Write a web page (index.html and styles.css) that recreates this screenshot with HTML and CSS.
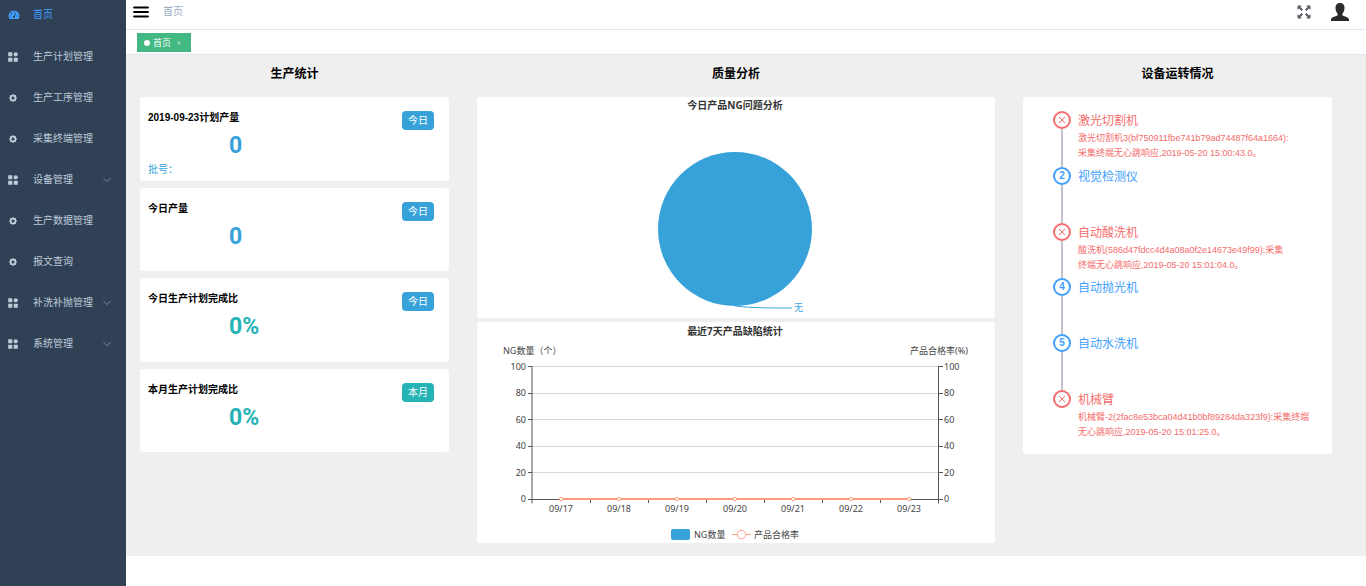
FILE: index.html
```html
<!DOCTYPE html>
<html lang="zh-CN">
<head>
<meta charset="utf-8">
<meta name="viewport" content="width=device-width, initial-scale=1">
<title>首页</title>
<link rel="stylesheet" href="styles.css">
</head>
<body>
<svg class="sprite" aria-hidden="true">
  <symbol id="i-dash" viewBox="0 0 12 12">
    <path fill="currentColor" fill-rule="evenodd" d="M6 1.4A5.4 5.4 0 0 0 1.400 9.700Q1.600 10 2 10H10Q10.400 10 10.600 9.700A5.400 5.400 0 0 0 6 1.400ZM5.400 2.400H6.600V3.600H5.400ZM2.700 3.700H3.900V4.900H2.700ZM1.500 6.400H2.700V7.600H1.500ZM9.300 6.400H10.500V7.600H9.300ZM7.500 3.700L8.300 4.100L6.900 7Q7.500 8 6.700 8.700Q6 9.200 5.200 8.700Q4.500 7.800 5.200 7Q5.600 6.600 6.100 6.700Z"/>
  </symbol>
  <symbol id="i-grid" viewBox="0 0 10 10">
    <path fill="currentColor" d="M.2.2h4.100v4.100H.2zM.2 5.700h4.100v4H.2zM5.700 5.700h4.100v4H5.700z"/><circle cx="7.700" cy="2.300" r="2.100" fill="currentColor"/>
  </symbol>
  <symbol id="i-gear" viewBox="0 0 10 10">
    <circle cx="5" cy="5" r="2.400" fill="none" stroke="currentColor" stroke-width="1.700"/>
    <path stroke="currentColor" stroke-width="1.500" d="M5 1.200v1.200M5 7.600v1.200M1.200 5h1.200M7.600 5h1.200M2.300 2.300l.9.9M6.800 6.800l.9.9M2.300 7.700l.9-.9M6.800 3.200l.9-.9"/>
  </symbol>
  <symbol id="i-down" viewBox="0 0 8 8"><path d="M.6 2.200L4 5.600L7.400 2.200" fill="none" stroke="currentColor"/></symbol>
  <symbol id="i-x" viewBox="0 0 8 8"><path d="M1 1L7 7M7 1L1 7" fill="none" stroke="currentColor"/></symbol>
</svg>
<div class="app">
  <nav class="sidebar">
    <ul class="menu">
      <li><a class="item active" href="#"><svg class="ico dash"><use href="#i-dash"/></svg><span>首页</span></a></li>
      <li><a class="item" href="#"><svg class="ico"><use href="#i-grid"/></svg><span>生产计划管理</span></a></li>
      <li><a class="item" href="#"><svg class="ico"><use href="#i-gear"/></svg><span>生产工序管理</span></a></li>
      <li><a class="item" href="#"><svg class="ico"><use href="#i-gear"/></svg><span>采集终端管理</span></a></li>
      <li><a class="item" href="#"><svg class="ico"><use href="#i-grid"/></svg><span>设备管理</span><svg class="arrow"><use href="#i-down"/></svg></a></li>
      <li><a class="item" href="#"><svg class="ico"><use href="#i-gear"/></svg><span>生产数据管理</span></a></li>
      <li><a class="item" href="#"><svg class="ico"><use href="#i-gear"/></svg><span>报文查询</span></a></li>
      <li><a class="item" href="#"><svg class="ico"><use href="#i-grid"/></svg><span>补洗补抛管理</span><svg class="arrow"><use href="#i-down"/></svg></a></li>
      <li><a class="item" href="#"><svg class="ico"><use href="#i-grid"/></svg><span>系统管理</span><svg class="arrow"><use href="#i-down"/></svg></a></li>
    </ul>
  </nav>
  <div class="page">
    <header class="navbar">
      <button class="icon-btn" aria-label="折叠菜单"><svg width="16" height="12" viewBox="0 0 16 12"><path d="M1 1.500H15M1 6H15M1 10.500H15" stroke="#000" stroke-width="1.800" stroke-linecap="round"/></svg></button>
      <a class="crumb" href="#">首页</a>
      <button class="icon-btn full" aria-label="全屏"><svg width="14" height="14" viewBox="0 0 14 14"><g fill="#5a5e66"><path id="c" d="M.5.5H4.700L3.500 1.900L6 4.400L4.500 5.900L2 3.400L.5 4.800Z"/><use href="#c" transform="matrix(-1 0 0 1 14 0)"/><use href="#c" transform="matrix(1 0 0 -1 0 14)"/><use href="#c" transform="matrix(-1 0 0 -1 14 14)"/></g></svg></button>
      <button class="icon-btn" aria-label="用户"><svg width="18" height="18" viewBox="0 0 18 18"><path fill="#2a2a2a" d="M9 0C12.200 0 13.700 2 13.500 5C13.400 7.500 12.600 9.400 11.400 10.700V12.200C12 13.200 17.600 13.500 18 16.500V18H0V16.500C.4 13.500 6 13.200 6.600 12.200V10.700C5.400 9.400 4.600 7.500 4.500 5C4.300 2 5.800 0 9 0Z"/></svg></button>
    </header>
    <div class="tabs">
      <div class="tab"><i class="dot"></i><a href="#">首页</a><button class="close" aria-label="关闭"><svg width="4" height="4"><use href="#i-x"/></svg></button></div>
    </div>
    <main class="board">
      <section>
        <h2>生产统计</h2>
        <div class="stats">
          <article class="card stat"><h3>2019-09-23计划产量</h3><span class="badge">今日</span><p class="num">0</p><p class="lot">批号：</p></article>
          <article class="card stat"><h3>今日产量</h3><span class="badge">今日</span><p class="num">0</p></article>
          <article class="card stat"><h3>今日生产计划完成比</h3><span class="badge">今日</span><p class="num teal">0%</p></article>
          <article class="card stat"><h3>本月生产计划完成比</h3><span class="badge teal-bg">本月</span><p class="num teal">0%</p></article>
        </div>
      </section>
      <section>
        <h2>质量分析</h2>
        <div class="charts">
          <div class="card">
            <svg class="chart" viewBox="0 0 518 221" role="img" aria-label="今日产品NG问题分析">
              <text class="ct mid" x="258" y="12">今日产品NG问题分析</text>
              <circle cx="258" cy="132" r="77" fill="#37a2da"/>
              <path d="M258 209Q275 211 300 211H315" fill="none" stroke="#37a2da"/>
              <text class="lab blue" x="317" y="214">无</text>
            </svg>
          </div>
          <div class="card">
            <svg class="chart" viewBox="0 0 518 221" role="img" aria-label="最近7天产品缺陷统计">
              <text class="ct mid" x="258" y="13">最近7天产品缺陷统计</text>
              <text class="lab" x="26" y="32">NG数量（个）</text>
              <text class="lab end" x="491" y="32">产品合格率(%)</text>
              <path d="M55 44.500H461M55 71.500H461M55 97.500H461M55 124.500H461M55 150.500H461" stroke="#d8d8d8"/>
              <path d="M55 44V181.500M461.500 44V181.500M51 177.500H466M51 44.500H55M51 71.500H55M51 97.500H55M51 124.500H55M51 150.500H55M462 44.500H466M462 71.500H466M462 97.500H466M462 124.500H466M462 150.500H466M113.500 177V181M171.500 177V181M229.500 177V181M287.500 177V181M345.500 177V181M403.500 177V181" fill="none" stroke="#555"/>
              <g class="lab end"><text x="49" y="48">100</text><text x="49" y="74">80</text><text x="49" y="101">60</text><text x="49" y="127">40</text><text x="49" y="154">20</text><text x="49" y="180">0</text></g>
              <g class="lab"><text x="467" y="48">100</text><text x="467" y="74">80</text><text x="467" y="101">60</text><text x="467" y="127">40</text><text x="467" y="154">20</text><text x="467" y="180">0</text></g>
              <g class="lab mid"><text x="84" y="190">09/17</text><text x="142" y="190">09/18</text><text x="200" y="190">09/19</text><text x="258" y="190">09/20</text><text x="316" y="190">09/21</text><text x="374" y="190">09/22</text><text x="432" y="190">09/23</text></g>
              <path d="M84 177H432" stroke="#ff9f7f" stroke-width="2"/>
              <g fill="#fff" stroke="#ff9f7f"><circle cx="84" cy="177" r="1.700"/><circle cx="142" cy="177" r="1.700"/><circle cx="200" cy="177" r="1.700"/><circle cx="258" cy="177" r="1.700"/><circle cx="316" cy="177" r="1.700"/><circle cx="374" cy="177" r="1.700"/><circle cx="432" cy="177" r="1.700"/></g>
              <rect x="194" y="207" width="19" height="11" rx="2" fill="#37a2da"/>
              <text class="lab" x="217" y="216">NG数量</text>
              <path d="M255 212.500H274" stroke="#ff9f7f"/><circle cx="264.500" cy="212.500" r="4.300" fill="#fff" stroke="#ff9f7f"/>
              <text class="lab" x="277" y="216">产品合格率</text>
            </svg>
          </div>
        </div>
      </section>
      <section>
        <h2>设备运转情况</h2>
        <div class="card devices">
          <ol class="steps">
            <li class="step error"><span class="mark"><svg width="8" height="8"><use href="#i-x"/></svg></span><div><h4>激光切割机</h4><p>激光切割机3(bf750911fbe741b79ad74487f64a1664):<br>采集终端无心跳响应,2019-05-20 15:00:43.0。</p></div></li>
            <li class="step"><span class="mark">2</span><div><h4>视觉检测仪</h4></div></li>
            <li class="step error"><span class="mark"><svg width="8" height="8"><use href="#i-x"/></svg></span><div><h4>自动酸洗机</h4><p>酸洗机(586d47fdcc4d4a08a0f2e14673e49f99):采集<br>终端无心跳响应,2019-05-20 15:01:04.0。</p></div></li>
            <li class="step"><span class="mark">4</span><div><h4>自动抛光机</h4></div></li>
            <li class="step"><span class="mark">5</span><div><h4>自动水洗机</h4></div></li>
            <li class="step error"><span class="mark"><svg width="8" height="8"><use href="#i-x"/></svg></span><div><h4>机械臂</h4><p>机械臂-2(2fac8e53bca04d41b0bf89284da323f9):采集终端<br>无心跳响应,2019-05-20 15:01:25.0。</p></div></li>
          </ol>
        </div>
      </section>
    </main>
  </div>
</div>
</body>
</html>
```
FILE: styles.css
```css
* { box-sizing: border-box; }
body, h2, h3, h4, p, ul, ol { margin: 0; padding: 0; }
ul, ol { list-style: none; }
body {
  font: 10px/16px "Liberation Sans", "Noto Sans CJK SC", sans-serif;
  color: #000;
  background: #fff;
}
a { color: inherit; text-decoration: none; }
button { border: 0; padding: 0; background: none; color: inherit; cursor: pointer; }
svg { display: block; flex: none; }
.sprite { position: absolute; width: 0; height: 0; }

.app { display: flex; min-height: 100vh; }
.page { flex: 1; min-width: 0; }

.sidebar { flex: none; width: 126px; background: #304156; color: #bfcbd9; }
.menu { display: flex; flex-direction: column; gap: 12px; }
.item { display: flex; align-items: center; height: 29px; padding: 0 15px 0 8px; }
.menu li:first-child .item { height: 30px; }
.item span { margin-left: 15px; }
.item.active { color: #409eff; }
.ico { width: 10px; height: 10px; }
.ico.dash { width: 12px; height: 12px; margin-right: -2px; }
.arrow { width: 8px; height: 8px; margin-left: auto; color: #7d8a9a; }

.navbar { display: flex; align-items: center; height: 30px; padding: 0 17px 6px 7px; border-bottom: 1px solid #e2e5e9; }
.crumb { margin-left: 14px; color: #97a8be; }
.full { margin-left: auto; margin-right: 20px; }

.tabs { height: 25px; padding: 3px 11px; border-bottom: 1px solid #e3e5ea; display: flex; }
.tab { display: flex; align-items: center; height: 19px; padding: 0 10px 0 7px; background: #42b983; color: #fff; font-size: 9px; }
.dot { width: 6px; height: 6px; margin-right: 3px; border-radius: 50%; background: #fff; }
.close { margin-left: 6px; }
.close svg { width: 4px; height: 4px; }

.board {
  display: grid;
  grid-template-columns: minmax(0, 309fr) minmax(0, 518fr) minmax(0, 309fr);
  gap: 28px;
  padding: 0 34px 13px 14px;
  background: #efefef;
}
h2 { font-size: 12px; line-height: 38px; text-align: center; margin-bottom: 4px; }
.card { background: #fff; border-radius: 3px; }

.stats { display: grid; grid-auto-rows: 1fr; gap: 7px; min-height: 355px; }
.stat { display: grid; grid-template-columns: 1fr auto; align-content: start; padding: 13px 15px 3px 8px; }
.stat h3 { font-size: 10px; line-height: 16px; }
.badge { grid-row: span 2; align-self: start; margin-top: 1px; padding: 0 6px; line-height: 19px; border-radius: 4px; background: #37a2da; color: #fff; }
.num { grid-column: 1; padding: 2px 0 0 81px; font: bold 23px/36px Roboto, sans-serif; color: #37a2da; }
.lot { grid-column: 1; color: #37a2da; line-height: 12px; }
.teal { color: #26b3b5; }
.teal-bg { background: #26b3b5; }

.charts { display: flex; flex-direction: column; gap: 4px; }
.chart { width: 100%; height: auto; font-family: "Noto Sans", "Noto Sans CJK SC", sans-serif; }
.ct { font-size: 10px; font-weight: bold; fill: #333; }
.lab { font-size: 9px; fill: #444; }
.blue { fill: #37a2da; }
.mid { text-anchor: middle; }
.end { text-anchor: end; }

.devices { padding: 14px 16px 14px 30px; }
.steps { display: flex; flex-direction: column; min-height: 329px; }
.step { position: relative; display: flex; flex: 1 1 0; gap: 7px; color: #409eff; }
.step:last-child { flex: none; }
.step:not(:last-child)::before { content: ""; position: absolute; left: 8px; top: 18px; bottom: 0; width: 2px; background: #c0c4cc; }
.step.error { color: #f56c6c; }
.mark { flex: none; display: flex; align-items: center; justify-content: center; width: 18px; height: 18px; border: 2px solid; border-radius: 50%; font-size: 10px; font-weight: bold; }
.mark svg { width: 8px; height: 8px; }
.step h4 { font-size: 12px; font-weight: normal; line-height: 20px; }
.step p { font-size: 9px; line-height: 15px; }
```
